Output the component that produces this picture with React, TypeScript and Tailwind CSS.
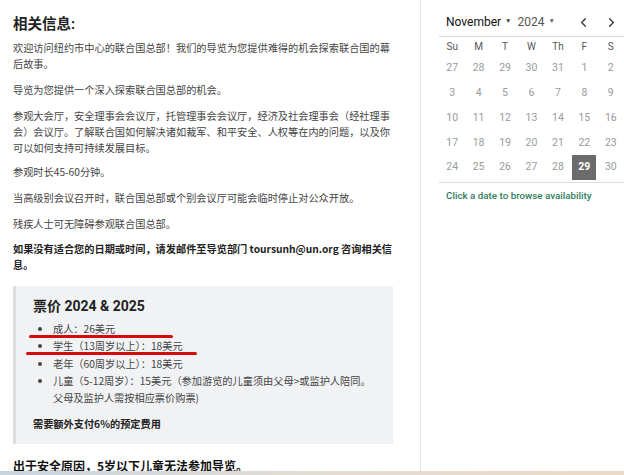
import React from 'react';
import { ChevronLeft, ChevronRight } from 'lucide-react';

const DAYS = ['Su', 'M', 'T', 'W', 'Th', 'F', 'S'];

const WEEKS = [
  [27, 28, 29, 30, 31, 1, 2],
  [3, 4, 5, 6, 7, 8, 9],
  [10, 11, 12, 13, 14, 15, 16],
  [17, 18, 19, 20, 21, 22, 23],
  [24, 25, 26, 27, 28, 29, 30],
];

const PRICES = [
  '成人：26美元',
  '学生（13周岁以上）：18美元',
  '老年（60周岁以上）：18美元',
  '儿童（5-12周岁）：15美元（参加游览的儿童须由父母>或监护人陪同。父母及监护人需按相应票价购票)',
];

const Calendar: React.FC = () => {
  return (
    <div className="pl-[18px] pt-[11px]" style={{ fontFamily: 'Roboto, "Noto Sans", sans-serif' }}>
      {/* Header */}
      <div className="flex items-center h-[22px] pl-[7px] border-b border-[#dcdcdc] box-content pb-[3px]">
        <span className="text-[12px] text-[#111]">November</span>
        <span className="text-[6.5px] text-[#444] ml-[4px]">▼</span>
        <span className="text-[12px] text-[#555] ml-[6px]">2024</span>
        <span className="text-[6.5px] text-[#666] ml-[4px]">▼</span>
        <div className="ml-auto flex items-center gap-[13px] pr-[5px]">
          <ChevronLeft size={15} strokeWidth={2} className="text-[#333]" />
          <ChevronRight size={15} strokeWidth={2} className="text-[#333]" />
        </div>
      </div>

      {/* Day names */}
      <div className="grid grid-cols-7">
        {DAYS.map(d => (
          <div key={d} className="h-[19px] flex items-center justify-center text-[10px] text-[#555]">{d}</div>
        ))}
      </div>

      {/* Weeks */}
      <div className="border-b border-[#dcdcdc] pb-[3px]">
        {WEEKS.map((week, wi) => (
          <div key={wi} className="grid grid-cols-7">
            {week.map((day, di) => {
              const selected = wi === 4 && day === 29;
              return (
                <div key={di} className="h-[24.7px] flex items-center justify-center">
                  {selected ? (
                    <span className="w-[24px] h-[25px] bg-[#6b6b6b] text-white font-bold text-[10.5px] flex items-center justify-center">
                      {day}
                    </span>
                  ) : (
                    <span className="text-[10.5px] text-[#9a9a9a]">{day}</span>
                  )}
                </div>
              );
            })}
          </div>
        ))}
      </div>

      <p className="mt-[6px] pl-[7px] text-[9.8px] leading-[14px] font-medium text-[#2e7d5b]">Click a date to browse availability</p>
    </div>
  );
};

const App: React.FC = () => {
  return (
    <div className="w-[624px] h-[475px] overflow-hidden bg-white flex flex-col">
      <div className="flex flex-1 min-h-0">
        {/* Left content */}
        <div
          className="w-[421px] shrink-0 border-r border-[#e6e6e6] pl-[13px] pt-[14px] text-[#444]"
          style={{ fontFamily: '"Noto Sans CJK SC", "Noto Sans", sans-serif' }}
        >
          <h2
            className="text-[14.5px] font-bold text-[#222] leading-[22px] mb-[4px]"
            style={{ fontFamily: 'Roboto, "Noto Sans CJK SC", sans-serif' }}
          >
            相关信息:
          </h2>

          <div className="w-[380px] text-[10.2px] leading-[16px]">
            <p className="mb-[10px]">欢迎访问纽约市中心的联合国总部！我们的导览为您提供难得的机会探索联合国的幕后故事。</p>
            <p className="mb-[10px]">导览为您提供一个深入探索联合国总部的机会。</p>
            <p className="mb-[8px]">参观大会厅，安全理事会会议厅，托管理事会会议厅，经济及社会理事会（经社理事会）会议厅。了解联合国如何解决诸如裁军、和平安全、人权等在内的问题，以及你可以如何支持可持续发展目标。</p>
            <p className="mb-[10px]">参观时长45-60分钟。</p>
            <p className="mb-[10px]">当高级别会议召开时，联合国总部或个别会议厅可能会临时停止对公众开放。</p>
            <p className="mb-[9px]">残疾人士可无障碍参观联合国总部。</p>
            <p className="font-bold text-[#222]">如果没有适合您的日期或时间，请发邮件至导览部门 toursunh@un.org 咨询相关信息。</p>
          </div>

          {/* Price box */}
          <div className="relative w-[380px] mt-[13px] bg-[#f1f2f4] border-l-[3px] border-[#dcdde0] pl-[17px] pt-[9px] pb-[12px]">
            <h3
              className="text-[14px] font-bold text-[#222] leading-[22px] mb-[3px]"
              style={{ fontFamily: 'Roboto, "Noto Sans CJK SC", sans-serif' }}
            >
              票价 2024 &amp; 2025
            </h3>
            <ul className="list-disc pl-[20px] text-[10.2px] leading-[17.3px] text-[#444] pr-[14px]">
              {PRICES.map((p, i) => (
                <li key={i}>{p}</li>
              ))}
            </ul>
            <p className="mt-[10px] text-[10.2px] font-bold text-[#222] leading-[16px]">需要额外支付6%的预定费用</p>

            {/* red marker lines */}
            <div className="absolute left-[13px] top-[49px] w-[144px] h-[3px] bg-[#d50b0b] rounded-full" />
            <div className="absolute left-[10px] top-[66px] w-[171px] h-[3px] bg-[#d50b0b] rounded-full" />
          </div>

          <p className="mt-[13px] text-[12px] font-bold text-[#111] leading-[18px]">出于安全原因，5岁以下儿童无法参加导览。</p>
        </div>

        {/* Right calendar */}
        <div className="flex-1 min-w-0">
          <Calendar />
        </div>
      </div>
      <div className="h-[4px] shrink-0 bg-gradient-to-r from-[#c8d5df] via-[#e3dcd2] to-[#ead9c6]" />
    </div>
  );
};

export default App;
